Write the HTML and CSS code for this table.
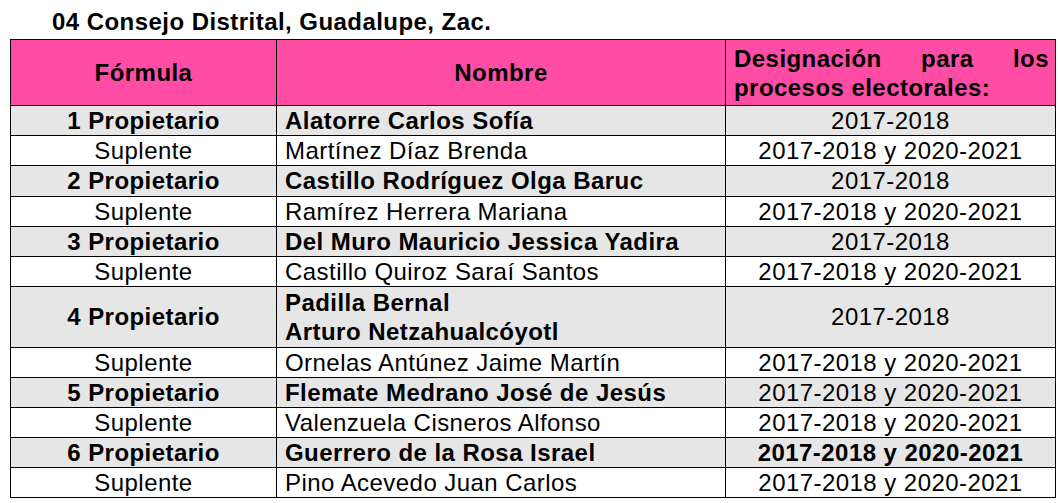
FILE: index.html
```html
<!DOCTYPE html>
<html lang="es">
<head>
<meta charset="utf-8">
<link rel="stylesheet" href="styles.css">
</head>
<body>
<h1 class="title">04 Consejo Distrital, Guadalupe, Zac.</h1>
<table class="grid">
  <colgroup>
    <col class="c1"><col class="c2"><col class="c3">
  </colgroup>
  <thead>
    <tr>
      <th class="center">Fórmula</th>
      <th class="center">Nombre</th>
      <th class="just">Designación para los procesos electorales:</th>
    </tr>
  </thead>
  <tbody>
    <tr class="prop"><td class="center">1 Propietario</td><td>Alatorre Carlos Sofía</td><td class="center norm">2017-2018</td></tr>
    <tr><td class="center">Suplente</td><td>Martínez Díaz Brenda</td><td class="center">2017-2018 y 2020-2021</td></tr>
    <tr class="prop"><td class="center">2 Propietario</td><td>Castillo Rodríguez Olga Baruc</td><td class="center norm">2017-2018</td></tr>
    <tr><td class="center">Suplente</td><td>Ramírez Herrera Mariana</td><td class="center">2017-2018 y 2020-2021</td></tr>
    <tr class="prop"><td class="center">3 Propietario</td><td>Del Muro Mauricio Jessica Yadira</td><td class="center norm">2017-2018</td></tr>
    <tr><td class="center">Suplente</td><td>Castillo Quiroz Saraí Santos</td><td class="center">2017-2018 y 2020-2021</td></tr>
    <tr class="prop tall"><td class="center">4 Propietario</td><td>Padilla Bernal<br>Arturo Netzahualcóyotl</td><td class="center norm">2017-2018</td></tr>
    <tr><td class="center">Suplente</td><td>Ornelas Antúnez Jaime Martín</td><td class="center">2017-2018 y 2020-2021</td></tr>
    <tr class="prop"><td class="center">5 Propietario</td><td>Flemate Medrano José de Jesús</td><td class="center norm">2017-2018 y 2020-2021</td></tr>
    <tr><td class="center">Suplente</td><td>Valenzuela Cisneros Alfonso</td><td class="center">2017-2018 y 2020-2021</td></tr>
    <tr class="prop"><td class="center">6 Propietario</td><td>Guerrero de la Rosa Israel</td><td class="center">2017-2018 y 2020-2021</td></tr>
    <tr><td class="center">Suplente</td><td>Pino Acevedo Juan Carlos</td><td class="center">2017-2018 y 2020-2021</td></tr>
  </tbody>
</table>
</body>
</html>
```
FILE: styles.css
```css
html, body {
  margin: 0;
  padding: 0;
  background: #ffffff;
}
body {
  font-family: "Liberation Sans", Arial, sans-serif;
  color: #000;
  padding: 8px 0 0 10px;
  letter-spacing: 0.45px;
}
.title {
  font-size: 24px;
  font-weight: bold;
  margin: 0 0 4px 42px;
  line-height: 27px;
}
.grid {
  border-collapse: collapse;
  width: 1045px;
  font-size: 24px;
  table-layout: fixed;
}
.c1 { width: 266px; }
.c2 { width: 449px; }
.c3 { width: 330px; }
.grid th, .grid td {
  border: 1px solid #000;
  padding: 0 8px;
  line-height: 29px;
  height: 29.2px;
  vertical-align: middle;
}
.grid th {
  background: #ff4da6;
  font-weight: bold;
  height: 64px;
  line-height: 29px;
}
.grid td { font-weight: normal; }
.grid .center { text-align: center; }
.grid .just {
  text-align: justify;
  text-align-last: left;
  padding: 1px 6px 0 8px;
}
.prop td {
  background: #e6e6e6;
  font-weight: bold;
}
.prop td.norm { font-weight: normal; }
.tall td { height: 59.4px; }
```
